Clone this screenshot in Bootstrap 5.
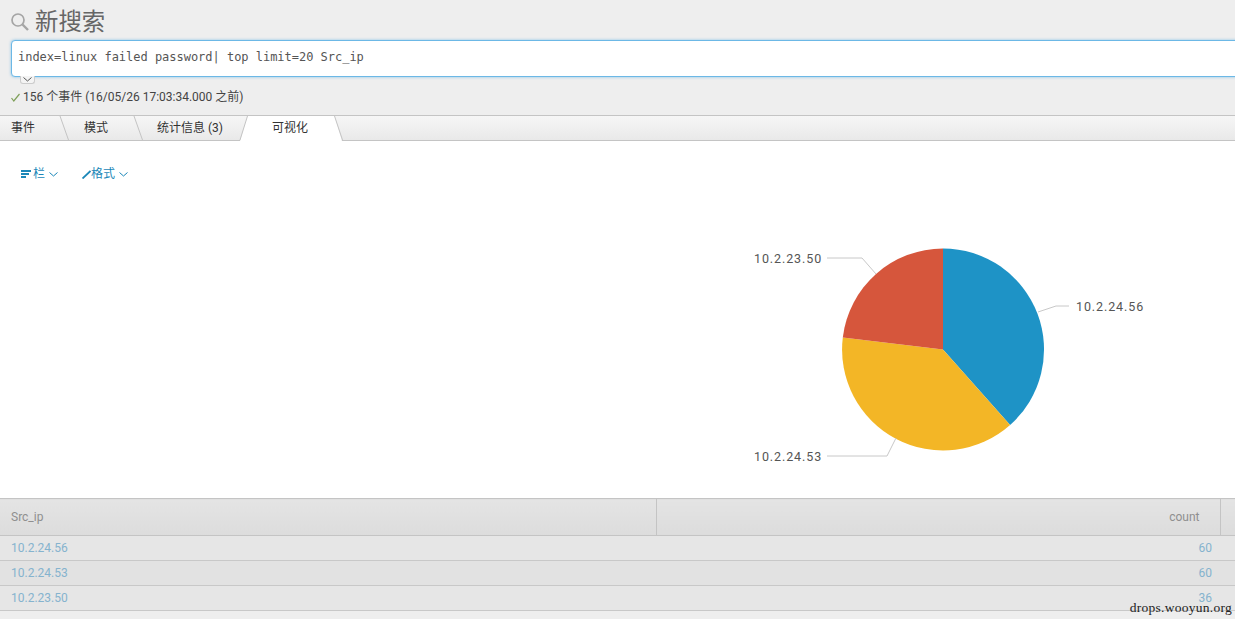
<!DOCTYPE html>
<html lang="zh">
<head>
<meta charset="utf-8">
<title>新搜索</title>
<link href="https://cdn.jsdelivr.net/npm/bootstrap@5.3.0/dist/css/bootstrap.min.css" rel="stylesheet">
<style>
html,body{height:100%}
body{background:#eee;font-family:Roboto,"Noto Sans CJK SC",sans-serif;font-size:12px;color:#333;width:1235px;height:619px;overflow:hidden;position:relative}
.srch-head{height:115px;padding:9px 0 0 11px;background:#eee}
.srch-title{height:26px;gap:6px;font-size:23.4px;line-height:26px;color:#666;font-weight:400;margin:0}
.srch-box{position:relative;margin-top:5px;height:37px;width:1240px;background:#fff;border:1px solid #6cb8e6;border-radius:4px;box-shadow:0 0 3px rgba(108,184,230,.8);font-family:"DejaVu Sans Mono",monospace;font-size:12px;letter-spacing:-.02px;line-height:33px;padding-left:6px;color:#555;white-space:nowrap}
.srch-caret{position:absolute;left:8px;top:35px;width:15px;height:8px;background:#f4f4f4;border:1px solid #ccc;border-top:0;border-radius:0 0 3px 3px;display:flex;align-items:center;justify-content:center}
.srch-status{gap:3px;margin-top:12px;line-height:16px;font-size:12px;color:#444}
.tab-strip{height:26px;background:linear-gradient(#f6f6f6,#e9e9e9);border-top:1px solid #c4c4c4;border-bottom:1px solid #c4c4c4;position:relative}
.tab-item{position:absolute;top:0;height:24px;line-height:25px;font-size:12px;color:#333;white-space:nowrap}
.tab-shape{position:absolute;left:0;top:-1px;pointer-events:none}
.tool-bar{height:357px;background:#fff;position:relative}
.tool-row{padding:25px 0 0 21px;color:#1b87b8;font-size:12px;line-height:16px}
.tool-btn{gap:2px}
.tool-btn+.tool-btn{margin-left:24px;gap:0}
.tool-chev{margin-left:2px;margin-top:1px}
.tool-btn+.tool-btn .tool-chev{margin-left:4px}
.pie-chart{position:absolute;left:740px;top:100px}
.pie-chart text{font-family:Roboto,sans-serif;font-size:12.5px;letter-spacing:.9px;fill:#555}
.res-table{width:1235px;table-layout:fixed;border-collapse:collapse;margin:0;font-size:12px}
.res-table th{height:37px;padding:0 11px;background:linear-gradient(#e4e4e4,#dcdcdc);color:#8f8f8f;font-weight:400;border-top:1px solid #c4c4c4;border-bottom:1px solid #c4c4c4}
.res-table th+th{border-left:1px solid #c4c4c4}
.res-table td{height:25px;padding:0 11px;color:#85b3ce;border-bottom:1px solid #c8c8c8;background:#e6e6e6;line-height:24px}
.res-table tr.alt td{background:#e2e2e2}
.res-table tbody tr td:nth-child(2){padding-right:8px}
.res-table .col-a{width:656px}
.res-table .col-c{width:15px;padding:0}
.res-table .th-count{padding-right:20px}
.wm-mark{position:absolute;right:3px;top:600px;font-family:"Liberation Serif",serif;font-size:13.5px;line-height:15px;letter-spacing:.27px;color:#222}
</style>
</head>
<body>
<header class="srch-head">
  <h1 class="srch-title d-flex align-items-center">
    <svg width="18" height="18" viewBox="0 0 18 18" fill="none" stroke="#a5a5a5"><circle cx="7" cy="7" r="6" stroke-width="1.700"/><path d="M11.500 11.500l5.500 5.500" stroke-width="2.400"/></svg>
    <span>新搜索</span>
  </h1>
  <div class="srch-box">index=linux failed password| top limit=20 Src_ip<span class="srch-caret"><svg width="9" height="5" viewBox="0 0 9 5" fill="none" stroke="#555"><path d="M.5.5l4 3.5 4-3.5"/></svg></span></div>
  <div class="srch-status d-flex align-items-center">
    <svg width="9" height="9" viewBox="0 0 9 9" fill="none" stroke="#7fa05a" stroke-width="1.200"><path d="M.5 5l2.300 3L8.500 1"/></svg>
    <span>156 个事件 (16/05/26 17:03:34.000 之前)</span>
  </div>
</header>

<nav class="tab-strip">
  <svg class="tab-shape" width="400" height="26" viewBox="0 0 400 26">
    <path d="M240 26L247.500 1H334.500L342 26z" fill="#fff"/>
    <path d="M60 1L68.500 25M134 1L142.500 25M240 25L247.500 1M334.500 1L342.500 25" stroke="#c4c4c4" fill="none"/>
  </svg>
  <span class="tab-item" style="left:11px">事件</span>
  <span class="tab-item" style="left:84px">模式</span>
  <span class="tab-item" style="left:157px">统计信息 (3)</span>
  <span class="tab-item" style="left:272px">可视化</span>
</nav>

<main class="tool-bar">
  <div class="tool-row d-flex">
    <span class="tool-btn d-flex align-items-center">
      <svg width="10" height="8" viewBox="0 0 10 8" fill="#1b87b8"><rect width="10" height="2"/><rect y="3" width="8" height="2"/><rect y="6" width="5" height="2"/></svg>
      <span>栏</span>
      <svg class="tool-chev" width="9" height="5" viewBox="0 0 9 5" fill="none" stroke="#1b87b8"><path d="M.5.5l4 3.500 4-3.500"/></svg>
    </span>
    <span class="tool-btn d-flex align-items-center">
      <svg width="9" height="9" viewBox="0 0 9 9" fill="none" stroke="#1b87b8" stroke-width="1.800"><path d="M.5 8.500L8.500 1"/></svg>
      <span>格式</span>
      <svg class="tool-chev" width="9" height="5" viewBox="0 0 9 5" fill="none" stroke="#1b87b8"><path d="M.5.5l4 3.500 4-3.500"/></svg>
    </span>
  </div>
  <svg class="pie-chart" width="420" height="225" viewBox="0 0 420 225">
    <path d="M203 7.500A101 101 0 0 1 270.100 184L203 108.500z" fill="#1e93c6"/>
    <path d="M270.100 184A101 101 0 0 1 102.800 96.400L203 108.500z" fill="#f3b626"/>
    <path d="M102.800 96.400A101 101 0 0 1 203 7.500L203 108.500z" fill="#d6563c"/>
    <path d="M87 17H122L136 33M298 71L316 65H329M87 215H147L156 197" fill="none" stroke="#c8c8c8"/>
    <text x="14" y="22">10.2.23.50</text>
    <text x="336" y="70">10.2.24.56</text>
    <text x="14" y="220">10.2.24.53</text>
  </svg>
</main>

<table class="res-table">
  <thead><tr><th class="col-a">Src_ip</th><th class="text-end th-count">count</th><th class="col-c"></th></tr></thead>
  <tbody>
    <tr><td>10.2.24.56</td><td class="text-end">60</td><td></td></tr>
    <tr class="alt"><td>10.2.24.53</td><td class="text-end">60</td><td></td></tr>
    <tr><td>10.2.23.50</td><td class="text-end">36</td><td></td></tr>
  </tbody>
</table>
<div class="wm-mark">drops.wooyun.org</div>
<script src="https://cdn.jsdelivr.net/npm/bootstrap@5.3.0/dist/js/bootstrap.bundle.min.js"></script>
</body>
</html>
